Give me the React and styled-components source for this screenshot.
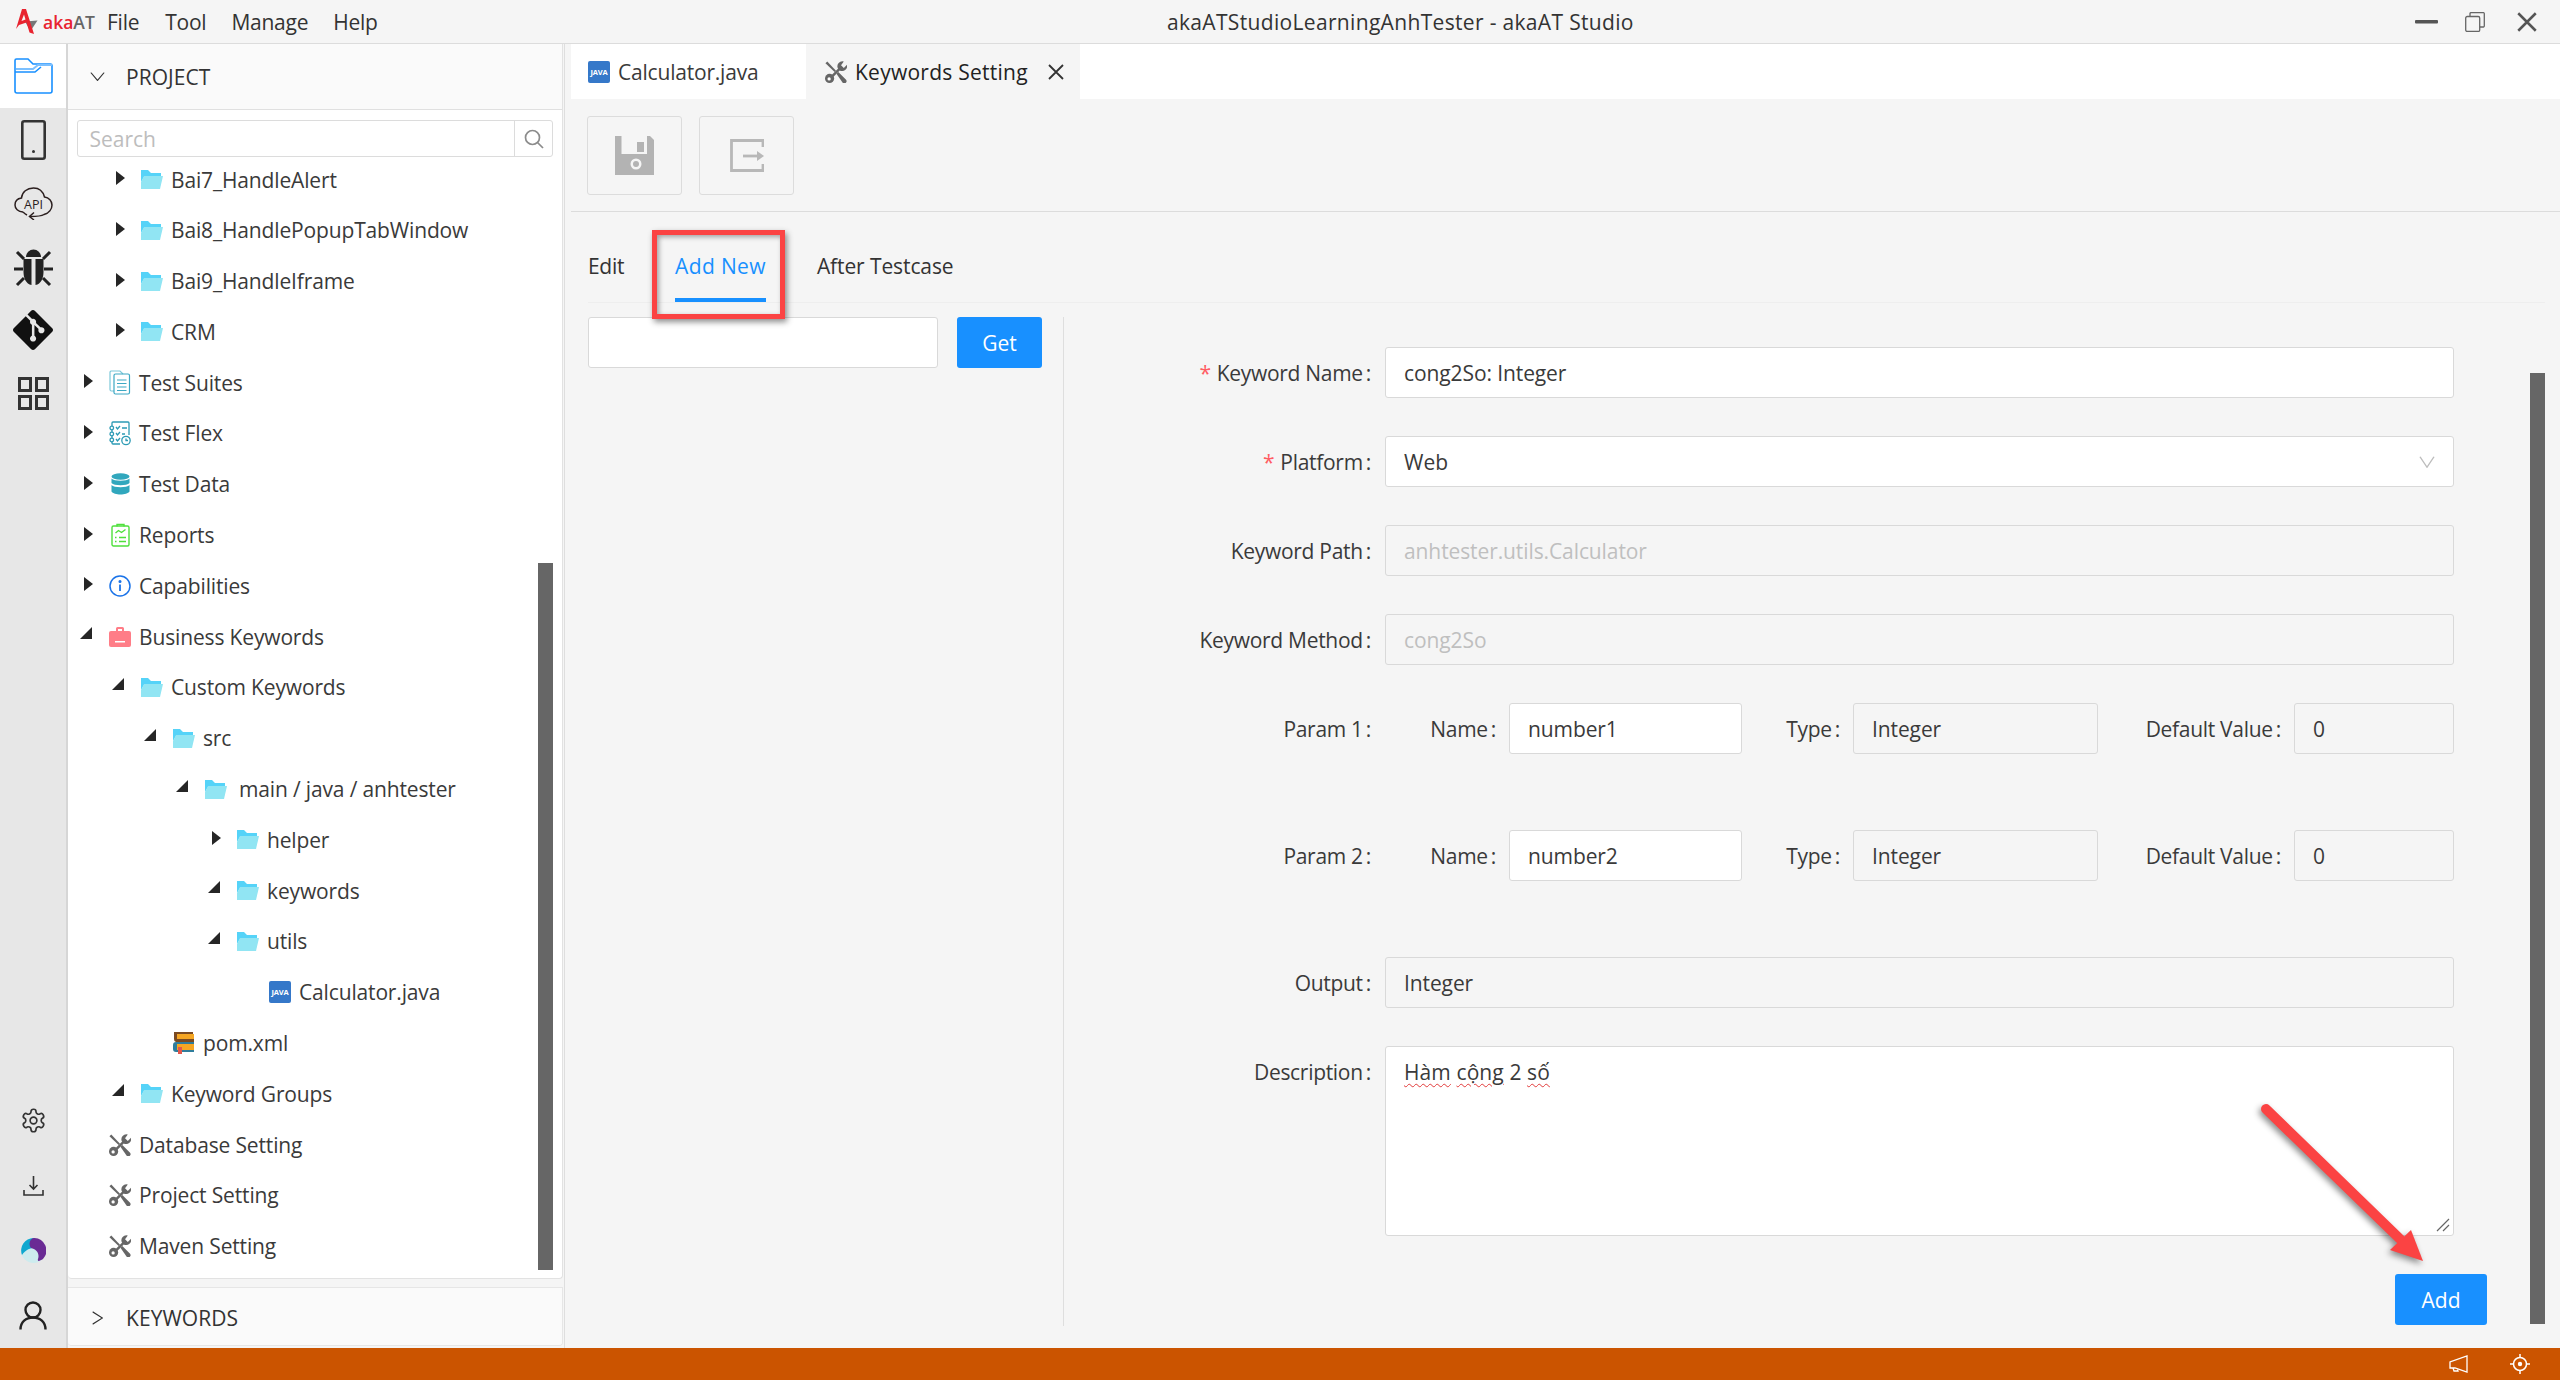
import React from "react";
import styled, { createGlobalStyle } from "styled-components";
import { SiGit } from "react-icons/si";
import { LuSettings } from "react-icons/lu";

const GlobalStyle = createGlobalStyle`
  html, body {
    margin: 0;
    padding: 0;
    background: #f5f5f5;
  }
  * {
    box-sizing: border-box;
  }
`;

const FONT = `"Open Sans", "Noto Sans", "Liberation Sans", sans-serif`;

const Page = styled.div`
  position: relative;
  width: 2560px;
  height: 1380px;
  display: flex;
  flex-direction: column;
  overflow: hidden;
  font-family: ${FONT};
  font-size: 21px;
  color: #333;
  background: #f5f5f5;
`;

/* title bar */
const TitleBar = styled.header`
  flex: 0 0 44px;
  display: flex;
  align-items: center;
  background: #f5f5f5;
  border-bottom: 1.5px solid #dcdcdc;
`;

const BrandMenu = styled.div`
  flex: 0 0 1167px;
  display: flex;
  align-items: center;
  padding-left: 16px;
`;

const LogoText = styled.div`
  display: flex;
  margin-left: 5px;
  width: 64px;
  font-size: 17.5px;
  font-weight: 600;
  color: #e8232f;
`;

const LogoGray = styled.span`
  color: #666;
`;

const MenuItem = styled.span`
  margin-right: ${(p) => p.$gap}px;
  color: #333;
  letter-spacing: -0.25px;
`;

const WindowTitle = styled.div`
  color: #333;
  white-space: nowrap;
  letter-spacing: 0.33px;
`;

const WindowButtons = styled.div`
  margin-left: auto;
  display: flex;
  align-items: center;
  gap: 27px;
  padding-right: 23px;
`;

const WindowClose = styled.span`
  display: flex;
  margin-left: 5.5px;
`;

/* body */
const Body = styled.div`
  flex: 1;
  display: flex;
  min-height: 0;
`;

const Rail = styled.nav`
  flex: 0 0 68px;
  display: flex;
  flex-direction: column;
  justify-content: space-between;
  background: #e7e7e7;
  border-right: 2px solid #d6d6d6;
`;

const RailGroup = styled.div`
  display: flex;
  flex-direction: column;
`;

const RailItem = styled.div`
  height: ${(p) => p.$h || 63.5}px;
  display: flex;
  align-items: center;
  justify-content: center;
  background: ${(p) => (p.$active ? "#fff" : "transparent")};
  color: #222;
`;

const SideColumn = styled.aside`
  flex: 0 0 497px;
  display: flex;
  flex-direction: column;
  background: #f5f5f5;
  border-right: 1.5px solid #dedede;
  padding-right: 1.5px;
`;

const ProjectCard = styled.section`
  height: 1235px;
  display: flex;
  flex-direction: column;
  background: #fff;
  border: solid #e2e2e2;
  border-width: 0 1px 1.5px 0;
  border-radius: 0 0 4px 4px;
`;

const CardHeader = styled.div`
  height: ${(p) => p.$h}px;
  flex: none;
  display: flex;
  align-items: center;
  background: #fafafa;
  border-bottom: ${(p) => (p.$line ? "1.5px solid #e0e0e0" : "none")};
  letter-spacing: 0.05px;
`;

const HeaderChevron = styled.span`
  width: 58px;
  display: flex;
  justify-content: center;
`;

const SearchBox = styled.div`
  flex: none;
  height: 37px;
  margin: 10px 8.5px 0 8.5px;
  display: flex;
  align-items: center;
  border: 1.5px solid #dcdcdc;
  border-radius: 3px;
  position: relative;
  z-index: 1;
  background: #fff;
`;

const SearchInput = styled.input`
  flex: 1;
  min-width: 0;
  height: 100%;
  border: 0;
  outline: 0;
  background: transparent;
  padding: 0 0 0 12px;
  font: inherit;
  &::placeholder {
    color: #bdbdbd;
  }
`;

const SearchIconBox = styled.span`
  width: 38px;
  height: 100%;
  display: flex;
  align-items: center;
  justify-content: center;
  border-left: 1.5px solid #dcdcdc;
`;

const Tree = styled.div`
  flex: 1;
  margin-top: -2.9px;
  position: relative;
  overflow: hidden;
`;

const Row = styled.div`
  height: 50.8px;
  display: flex;
  align-items: center;
  padding-left: ${(p) => 12 + p.$level * 32}px;
  white-space: nowrap;
`;

const CaretBox = styled.span`
  flex: 0 0 16px;
  height: 20px;
  margin-right: 13px;
  display: flex;
  align-items: center;
  justify-content: ${(p) => (p.$open ? "flex-start" : "center")};
  position: relative;
  top: ${(p) => (p.$open ? -3.5 : -1.5)}px;
`;

const CaretRight = styled.span`
  width: 0;
  height: 0;
  border-style: solid;
  border-width: 7px 0 7px 9px;
  border-color: transparent transparent transparent #262626;
`;

const CaretOpen = styled.span`
  width: 0;
  height: 0;
  border-style: solid;
  border-width: 0 0 12px 12px;
  border-color: transparent transparent #262626 transparent;
`;

const IconSlot = styled.span`
  flex: 0 0 22px;
  height: 24px;
  display: flex;
  align-items: center;
  justify-content: center;
  margin-right: ${(p) => p.$gap || 8}px;
`;

const RowLabel = styled.span`
  color: #3a3a3a;
  letter-spacing: -0.15px;
`;

const JavaBadge = styled.span`
  width: 22px;
  height: 22px;
  flex: none;
  border-radius: 2px;
  background: #3578c9;
  color: #fff;
  font-size: 7.5px;
  font-weight: 700;
  line-height: 22px;
  text-align: center;
  letter-spacing: -0.2px;
`;

const Scrollbar = styled.div`
  position: absolute;
  background: #666;
  width: 15px;
  right: ${(p) => p.$right}px;
  top: ${(p) => p.$top}px;
  height: ${(p) => p.$h}px;
`;

const KeywordsCard = styled.section`
  margin-top: 8px;
  height: 59px;
  border: 1.5px solid #e6e6e6;
  border-left: 0;
  border-radius: 0 0 4px 4px;
  overflow: hidden;
`;

/* main */
const Main = styled.main`
  flex: 1;
  min-width: 0;
  display: flex;
  flex-direction: column;
  position: relative;
  background: #f5f5f5;
`;

const TabStrip = styled.div`
  flex: 0 0 55px;
  margin-left: 6px;
  display: flex;
  background: #fff;
`;

const FileTab = styled.div`
  width: ${(p) => p.$w}px;
  display: flex;
  align-items: center;
  padding-left: ${(p) => p.$pad}px;
  gap: 8px;
  background: ${(p) => (p.$active ? "#f5f5f5" : "#fff")};
  color: ${(p) => (p.$active ? "#222" : "#3a3a3a")};
  white-space: nowrap;
  letter-spacing: ${(p) => (p.$active ? "0.25px" : "-0.2px")};
`;

const CloseX = styled.span`
  display: flex;
  margin-left: 12px;
`;

const Toolbar = styled.div`
  flex: 0 0 113px;
  display: flex;
  gap: 17px;
  margin-left: 6px;
  padding: 17px 0 0 16px;
  border-bottom: 1.5px solid #dcdcdc;
`;

const ToolButton = styled.div`
  width: 95px;
  height: 79px;
  display: flex;
  align-items: center;
  justify-content: center;
  border: 1.5px solid #dcdcdc;
  border-radius: 3px;
`;

const TabsBar = styled.div`
  flex: 0 0 90px;
  display: flex;
  gap: 51px;
  margin: 0 15.5px 0 23px;
  border-bottom: 1.5px solid #eeeeee;
`;

const TabItem = styled.div`
  height: 90px;
  padding-top: 36px;
  line-height: 36px;
  color: ${(p) => (p.$active ? "#1890ff" : "#333")};
  border-bottom: ${(p) => (p.$active ? "4px solid #1890ff" : "none")};
  white-space: nowrap;
  letter-spacing: ${(p) => p.$spacing}px;
`;

const Content = styled.div`
  flex: 1;
  min-height: 0;
  display: flex;
  margin: 14px 0 0 23px;
`;

const LookupColumn = styled.div`
  flex: 0 0 476px;
  height: 1009px;
  display: flex;
  gap: 19px;
  align-items: flex-start;
  border-right: 1.5px solid #dedede;
`;

const Input = styled.input`
  width: ${(p) => (p.$w ? `${p.$w}px` : "100%")};
  height: 51px;
  flex: ${(p) => (p.$w ? "none" : "1")};
  min-width: 0;
  padding: 0 18px;
  font: inherit;
  letter-spacing: -0.1px;
  outline: 0;
  border: 1.5px solid #d9d9d9;
  border-radius: 3px;
  background: ${(p) => (p.$muted ? "#f5f5f5" : "#fff")};
  color: ${(p) => (p.$faded ? "#bfbfbf" : "#3a3a3a")};
`;

const PrimaryButton = styled.button`
  width: ${(p) => p.$w}px;
  height: 51px;
  flex: none;
  border: 0;
  border-radius: 3px;
  background: #1890ff;
  color: #fff;
  font: inherit;
`;

const Form = styled.div`
  width: 1390px;
  padding-top: 30px;
  display: flex;
  flex-direction: column;
  align-items: stretch;
`;

const FormRow = styled.div`
  display: grid;
  grid-template-columns: 307px 1fr;
  column-gap: 14px;
  margin-bottom: ${(p) => p.$gap || 38}px;
  align-items: ${(p) => (p.$top ? "start" : "center")};
`;

const Label = styled.label`
  display: block;
  text-align: right;
  white-space: nowrap;
  color: #3a3a3a;
  letter-spacing: -0.3px;
  line-height: ${(p) => (p.$top ? "53px" : "normal")};
`;

const Required = styled.span`
  color: #ff5c63;
  margin-right: 6px;
`;

const Colon = styled.span`
  margin-left: 3px;
`;

const ParamFields = styled.div`
  display: flex;
  align-items: center;
`;

const ParamLabel = styled(Label)`
  flex: 0 0 ${(p) => p.$w}px;
  padding-right: 13px;
`;

const SelectBox = styled.div`
  height: 51px;
  padding: 0 18px;
  display: flex;
  align-items: center;
  justify-content: space-between;
  background: #fff;
  border: 1.5px solid #d9d9d9;
  border-radius: 3px;
  color: #3a3a3a;
`;

const TextArea = styled.div`
  position: relative;
  height: 190px;
  padding: 11px 18px;
  background: #fff;
  border: 1.5px solid #d9d9d9;
  border-radius: 3px;
  color: #3a3a3a;
  letter-spacing: 0.1px;
`;

const Misspelled = styled.span`
  text-decoration: underline wavy #e23b3b 1.2px;
  text-underline-offset: 3px;
`;

const ResizeGrip = styled.svg`
  position: absolute;
  right: 3px;
  bottom: 3px;
`;

const FormActions = styled.div`
  display: flex;
  justify-content: flex-end;
  margin-right: -33px;
`;

/* annotations */
const Callout = styled.div`
  position: absolute;
  left: 652px;
  top: 230px;
  width: 133px;
  height: 89px;
  border: 5px solid #fb4343;
  box-shadow: 2px 3px 6px rgba(0, 0, 0, 0.45), inset 2px 2px 5px rgba(0, 0, 0, 0.35);
`;

const ArrowMark = styled.svg`
  position: absolute;
  left: 2250px;
  top: 1095px;
  filter: drop-shadow(-2px 3px 3px rgba(0, 0, 0, 0.45));
`;

/* status bar */
const StatusBar = styled.footer`
  flex: 0 0 32px;
  display: flex;
  align-items: center;
  justify-content: flex-end;
  gap: 42px;
  padding-right: 30px;
  background: #cb5400;
`;

/* icons */
const Folder = () => (
  <svg width="22" height="19" viewBox="0 0 22 19">
    <path d="M0 0H7L10 3H20V7H3L0 12Z" fill="#55d3f8" />
    <path d="M0 19V12L3 6H22L19 19Z" fill="#91e5f3" />
  </svg>
);

const Tools = ({ size = 22 }) => (
  <svg width={size} height={size} viewBox="0 0 24 24">
    <path d="M0.5 2.5L2.5 0.5L12 10.5L10.5 12Z" fill="#666" />
    <path d="M12.5 14L14.5 12L23 20.5A2.5 2.5 0 0 1 19.5 24Z" fill="#666" />
    <path d="M7 15.5L15.5 7L17.5 9L9 17.5Z" fill="#666" />
    <path d="M24 4L20.5 7.5L17.5 4.5L20.5 0.5A5.5 5.5 0 0 0 14 8L16.5 10.5A5.5 5.5 0 0 0 24 4Z" fill="#666" />
    <circle cx="5" cy="19" r="5" fill="#666" />
    <circle cx="4.5" cy="19.5" r="1.8" fill="#fff" />
  </svg>
);

const Suites = () => (
  <svg width="22" height="25" viewBox="0 0 22 25" fill="none" stroke="#3da8c4" strokeWidth="1.2">
    <path d="M5 21H2.5A1.5 1.5 0 0 1 1 19.5V2A1.5 1.5 0 0 1 2.5 1H11L14 4" stroke="#7cc8da" />
    <rect x="5" y="4" width="15.5" height="20" rx="1.5" />
    <path d="M8 10H17.5M8 13.5H17.5M8 17H17.5M8 20.5H17.5" />
  </svg>
);

const Flex = () => (
  <svg width="22" height="25" viewBox="0 0 22 25" fill="none" stroke="#2d9bb5" strokeWidth="1.3">
    <path d="M3 5V2A1 1 0 0 1 4 1H19A1 1 0 0 1 20 2V14M3 9V11M3 15V17M3 21V22A1 1 0 0 0 4 23H11" />
    <circle cx="2.8" cy="7" r="1.8" />
    <circle cx="2.8" cy="13" r="1.8" />
    <circle cx="2.8" cy="19" r="1.8" />
    <path d="M7 6L8.5 8L11 5M7 12L8.5 14L11 11M7 18L8.5 20L11 17M13 7H18M13 13H16" />
    <circle cx="17" cy="19.5" r="4.2" fill="#fff" />
    <path d="M17 17.5V19.5H19" />
  </svg>
);

const Database = () => (
  <svg width="19" height="22" viewBox="0 0 19 22">
    <ellipse cx="9.5" cy="3.5" rx="9" ry="3.2" fill="#31a7bd" />
    <path d="M0.5 5.5C3 8.5 16 8.5 18.5 5.5V10C16 13 3 13 0.5 10Z" fill="#31a7bd" />
    <path d="M0.5 12C3 15 16 15 18.5 12V18.5C16 22.5 3 22.5 0.5 18.5Z" fill="#31a7bd" />
  </svg>
);

const Report = () => (
  <svg width="19" height="24" viewBox="0 0 19 24" fill="none" stroke="#4fe03c" strokeWidth="1.4">
    <rect x="1" y="3" width="17" height="20" rx="1.5" />
    <path d="M6 3.5V1.5H13V3.5" />
    <path d="M4.5 10L7.5 7.5L10.5 9.5L14.5 6.5M4 14.5H5.5M8 14.5H15M4 18.5H5.5M8 18.5H15" />
  </svg>
);

const Info = () => (
  <svg width="22" height="22" viewBox="0 0 22 22" fill="none" stroke="#1a73e8" strokeWidth="1.5">
    <circle cx="11" cy="11" r="10" />
    <path d="M11 9.5V16" strokeWidth="1.8" />
    <circle cx="11" cy="6.5" r="0.8" fill="#1a73e8" />
  </svg>
);

const Briefcase = () => (
  <svg width="22" height="20" viewBox="0 0 22 20">
    <path d="M7 4V1.5A1.5 1.5 0 0 1 8.5 0H13.5A1.5 1.5 0 0 1 15 1.5V4H13V2H9V4Z" fill="#ff7d87" />
    <rect x="0" y="4" width="22" height="16" rx="2" fill="#ff7d87" />
    <rect x="6" y="14" width="10" height="1.5" fill="#fff" />
  </svg>
);

const Books = () => (
  <svg width="22" height="22" viewBox="0 0 22 22">
    <path d="M1 0H20V2H4V7H21V10H3A3 3 0 0 1 1 7Z" fill="#7a4a22" />
    <rect x="4" y="2" width="17" height="5" fill="#f5a623" />
    <path d="M0 13A3 3 0 0 1 3 10H21V12H4V18H21V20H3A3 3 0 0 1 0 17Z" fill="#2f7d9c" />
    <rect x="4" y="12" width="17" height="6" fill="#f5a623" />
    <rect x="5" y="15" width="4" height="7" fill="#e2574c" />
  </svg>
);

const RailFolder = () => (
  <svg width="39" height="36" viewBox="0 0 39 36" fill="none" stroke="#1890ff" strokeWidth="1.6">
    <path d="M1 8V2.5A1.5 1.5 0 0 1 2.5 1H14L19 6H36.5A1.5 1.5 0 0 1 38 7.5V33A2 2 0 0 1 36 35H3A2 2 0 0 1 1 33Z" />
    <path d="M2 11H19L24 7H38" stroke="#7cc0ff" strokeWidth="2" />
    <path d="M1 14H21L27 9" />
  </svg>
);

const Phone = () => (
  <svg width="25" height="40" viewBox="0 0 25 40" fill="none" stroke="#333" strokeWidth="2.6">
    <rect x="1.3" y="1.3" width="22.4" height="37.4" rx="2" />
    <circle cx="12.5" cy="31.5" r="1.5" fill="#333" stroke="none" />
  </svg>
);

const ApiCloud = () => (
  <svg width="39" height="33" viewBox="0 0 39 33" fill="none" stroke="#2b1f1f" strokeWidth="1.5">
    <path d="M9 25C4 25 1 21.5 1 18C1 14 4 11.5 7.5 11C8 5 13 1 19.5 1C25 1 29 4.5 30.5 10C35 10.5 38 14 38 18C38 22 35 26 30 27.5C27 29.5 22 29.5 16 29.5" />
    <path d="M20 25.5L15.5 29.5L20 33" />
    <path d="M9 25C10 26 11 27 13 28" />
    <text x="19.5" y="22" fontSize="12.5" fontFamily="Open Sans, sans-serif" fill="#2b1f1f" stroke="none" textAnchor="middle">API</text>
  </svg>
);

const Bug = () => (
  <svg width="39" height="40" viewBox="0 0 39 40" fill="#222">
    <path d="M12 10A7.5 7.5 0 0 1 27 10Z" />
    <path d="M9.5 12H17.5V38C12 37 9.5 31 9.5 25Z" />
    <path d="M29.5 12H21.5V38C27 37 29.5 31 29.5 25Z" />
    <path d="M3 5L10 12M36 5L29 12M0 22H9M39 22H30M3 38L10 31M36 38L29 31" stroke="#222" strokeWidth="3" />
  </svg>
);

const Grid = () => (
  <svg width="31" height="33" viewBox="0 0 31 33" fill="none" stroke="#333" strokeWidth="3">
    <rect x="1.5" y="1.5" width="11" height="12" />
    <rect x="18.5" y="1.5" width="11" height="12" />
    <rect x="1.5" y="19.5" width="11" height="12" />
    <rect x="18.5" y="19.5" width="11" height="12" />
  </svg>
);

const Download = () => (
  <svg width="21" height="20" viewBox="0 0 21 20" fill="none" stroke="#333" strokeWidth="1.6">
    <path d="M10.5 0V12M6.5 9L10.5 13L14.5 9" />
    <path d="M1 14V19H20V14" />
  </svg>
);

const SwirlLogo = () => (
  <svg width="25" height="25" viewBox="0 0 25 25">
    <circle cx="12.5" cy="12.5" r="12.5" fill="#cdebee" />
    <path d="M12.5 0A12.5 12.5 0 0 0 1 17C5 11 10 10 12.5 10Z" fill="#0fa7cf" />
    <path d="M12.5 0A12.5 12.5 0 0 1 22 21C19 23 16 24 17 21C19 15 15 11 10 10C7 6 9 1 12.5 0Z" fill="#6a2a94" />
  </svg>
);

const UserIcon = () => (
  <svg width="28" height="29" viewBox="0 0 28 29" fill="none" stroke="#222" strokeWidth="2.4">
    <circle cx="14" cy="9" r="7.5" />
    <path d="M1.5 28.5C1.5 21 7 16.5 14 16.5C21 16.5 26.5 21 26.5 28.5" />
  </svg>
);

const SearchGlass = () => (
  <svg width="20" height="20" viewBox="0 0 20 20" fill="none" stroke="#8c8c8c" strokeWidth="1.7">
    <circle cx="8.5" cy="8.5" r="7" />
    <path d="M13.5 13.5L19 19" />
  </svg>
);

const Chevron = ({ dir, w, h, color = "#333" }) => (
  <svg width={w} height={h} viewBox="0 0 16 16" preserveAspectRatio="none" fill="none" stroke={color} strokeWidth="1.4">
    {dir === "down" ? <path d="M1 1L8 15L15 1" /> : <path d="M1 1L15 8L1 15" />}
  </svg>
);

const Floppy = () => (
  <svg width="39" height="39" viewBox="0 0 39 39">
    <path d="M0 0H35L39 4V39H0Z" fill="#b3b3b3" />
    <rect x="6.5" y="0" width="25.5" height="18" fill="#f5f5f5" />
    <rect x="22" y="6" width="7" height="10" fill="#b3b3b3" />
    <circle cx="21" cy="28" r="5.5" fill="#f5f5f5" />
    <circle cx="21" cy="28" r="3" fill="#b3b3b3" />
  </svg>
);

const ExitBox = () => (
  <svg width="34" height="33" viewBox="0 0 34 33" fill="none" stroke="#b8b8b8" strokeWidth="2.8">
    <path d="M33 8V1.5H1.5V31.5H33V25" />
    <path d="M13 17H28" />
    <path d="M27 12L34 17L27 22Z" fill="#b8b8b8" stroke="none" />
  </svg>
);

const XMark = ({ size, color = "#333", width = 1.8 }) => (
  <svg width={size} height={size} viewBox="0 0 16 16" fill="none" stroke={color} strokeWidth={width}>
    <path d="M1 1L15 15M15 1L1 15" />
  </svg>
);

const Minimize = () => (
  <svg width="23" height="4" viewBox="0 0 23 4">
    <rect width="23" height="3.5" rx="1" fill="#555" />
  </svg>
);

const Restore = () => (
  <svg width="20" height="20" viewBox="0 0 20 20" fill="none" stroke="#666" strokeWidth="1.3">
    <path d="M5 4V1.5A1 1 0 0 1 6 .7H18.5A1 1 0 0 1 19.3 1.5V14A1 1 0 0 1 18.5 15H15" />
    <rect x="0.7" y="4.5" width="14" height="15" rx="1.5" fill="#f5f5f5" />
  </svg>
);

const LogoMark = () => (
  <svg width="22" height="25" viewBox="0 0 22 25">
    <path d="M9 12.5L21.5 11.5L14.5 22Z" fill="#777" />
    <path d="M6 0H10L18 25L13.5 23.5L10.5 13.5L3 16L0 20ZM8 5.5L5.5 12L9.5 10.5Z" fill="#e8232f" fillRule="evenodd" />
  </svg>
);

const Megaphone = () => (
  <svg width="19" height="18" viewBox="0 0 19 18" fill="none" stroke="#fff" strokeWidth="1.3">
    <path d="M18 1V17L6 13H1V7Z" />
    <path d="M4 13L5 16H9L8.5 14.5" />
  </svg>
);

const Target = () => (
  <svg width="20" height="20" viewBox="0 0 20 20" fill="none" stroke="#fff" strokeWidth="1.5">
    <circle cx="10" cy="10" r="6.5" />
    <circle cx="10" cy="10" r="2.2" fill="#fff" stroke="none" />
    <path d="M10 0V4M10 16V20M0 10H4M16 10H20" />
  </svg>
);

const renderRowIcon = (icon) => {
  switch (icon) {
    case "folder":
      return <Folder />;
    case "tools":
      return <Tools />;
    case "suites":
      return <Suites />;
    case "flex":
      return <Flex />;
    case "data":
      return <Database />;
    case "report":
      return <Report />;
    case "info":
      return <Info />;
    case "case":
      return <Briefcase />;
    case "books":
      return <Books />;
    default:
      return <JavaBadge>JAVA</JavaBadge>;
  }
};

const treeRows = [
  { level: 1, caret: "right", icon: "folder", label: "Bai7_HandleAlert" },
  { level: 1, caret: "right", icon: "folder", label: "Bai8_HandlePopupTabWindow" },
  { level: 1, caret: "right", icon: "folder", label: "Bai9_HandleIframe" },
  { level: 1, caret: "right", icon: "folder", label: "CRM" },
  { level: 0, caret: "right", icon: "suites", label: "Test Suites" },
  { level: 0, caret: "right", icon: "flex", label: "Test Flex" },
  { level: 0, caret: "right", icon: "data", label: "Test Data" },
  { level: 0, caret: "right", icon: "report", label: "Reports" },
  { level: 0, caret: "right", icon: "info", label: "Capabilities" },
  { level: 0, caret: "open", icon: "case", label: "Business Keywords" },
  { level: 1, caret: "open", icon: "folder", label: "Custom Keywords" },
  { level: 2, caret: "open", icon: "folder", label: "src" },
  { level: 3, caret: "open", icon: "folder", label: "main / java / anhtester", gap: 12 },
  { level: 4, caret: "right", icon: "folder", label: "helper" },
  { level: 4, caret: "open", icon: "folder", label: "keywords" },
  { level: 4, caret: "open", icon: "folder", label: "utils" },
  { level: 5, icon: "java", label: "Calculator.java" },
  { level: 2, icon: "books", label: "pom.xml" },
  { level: 1, caret: "open", icon: "folder", label: "Keyword Groups" },
  { level: 0, icon: "tools", label: "Database Setting" },
  { level: 0, icon: "tools", label: "Project Setting" },
  { level: 0, icon: "tools", label: "Maven Setting" },
];

const TreeRow = ({ level, caret, icon, label, gap }) => (
  <Row $level={level}>
    <CaretBox $open={caret === "open"}>
      {caret === "right" && <CaretRight />}
      {caret === "open" && <CaretOpen />}
    </CaretBox>
    <IconSlot $gap={gap}>{renderRowIcon(icon)}</IconSlot>
    <RowLabel>{label}</RowLabel>
  </Row>
);

const FieldLabel = ({ required, children }) => (
  <Label>
    {required && <Required>*</Required>}
    {children}
    <Colon>:</Colon>
  </Label>
);

const ParamRow = ({ title, name, gap }) => (
  <FormRow $gap={gap}>
    <FieldLabel>{title}</FieldLabel>
    <ParamFields>
      <ParamLabel $w={124}>
        Name<Colon>:</Colon>
      </ParamLabel>
      <Input $w={232.5} defaultValue={name} readOnly />
      <ParamLabel $w={111.5}>
        Type<Colon>:</Colon>
      </ParamLabel>
      <Input $w={245} $muted defaultValue="Integer" readOnly />
      <ParamLabel $w={196}>
        Default Value<Colon>:</Colon>
      </ParamLabel>
      <Input $w={160} $muted defaultValue="0" readOnly />
    </ParamFields>
  </FormRow>
);

const App = () => {
  return (
    <Page>
      <GlobalStyle />
      <TitleBar>
        <BrandMenu>
          <LogoMark />
          <LogoText>
            aka<LogoGray>AT</LogoGray>
          </LogoText>
          <MenuItem $gap={26}>File</MenuItem>
          <MenuItem $gap={25}>Tool</MenuItem>
          <MenuItem $gap={25}>Manage</MenuItem>
          <MenuItem $gap={0}>Help</MenuItem>
        </BrandMenu>
        <WindowTitle>akaATStudioLearningAnhTester - akaAT Studio</WindowTitle>
        <WindowButtons>
          <Minimize />
          <Restore />
          <WindowClose>
            <XMark size={20} color="#555" width={2} />
          </WindowClose>
        </WindowButtons>
      </TitleBar>

      <Body>
        <Rail>
          <RailGroup>
            <RailItem $active $h={64}>
              <RailFolder />
            </RailItem>
            <RailItem>
              <Phone />
            </RailItem>
            <RailItem>
              <ApiCloud />
            </RailItem>
            <RailItem>
              <Bug />
            </RailItem>
            <RailItem>
              <SiGit size={40} color="#111" />
            </RailItem>
            <RailItem>
              <Grid />
            </RailItem>
          </RailGroup>
          <RailGroup>
            <RailItem $h={65}>
              <LuSettings size={27} strokeWidth={1.5} color="#333" />
            </RailItem>
            <RailItem $h={65}>
              <Download />
            </RailItem>
            <RailItem $h={65}>
              <SwirlLogo />
            </RailItem>
            <RailItem $h={65}>
              <UserIcon />
            </RailItem>
          </RailGroup>
        </Rail>

        <SideColumn>
          <ProjectCard>
            <CardHeader $h={66} $line>
              <HeaderChevron>
                <Chevron dir="down" w={15} h={9} />
              </HeaderChevron>
              PROJECT
            </CardHeader>
            <SearchBox>
              <SearchInput placeholder="Search" readOnly />
              <SearchIconBox>
                <SearchGlass />
              </SearchIconBox>
            </SearchBox>
            <Tree>
              {treeRows.map((row) => (
                <TreeRow key={row.label} {...row} />
              ))}
              <Scrollbar $right={9} $top={409} $h={707} />
            </Tree>
          </ProjectCard>
          <KeywordsCard>
            <CardHeader $h={59}>
              <HeaderChevron>
                <Chevron dir="right" w={11} h={14} />
              </HeaderChevron>
              KEYWORDS
            </CardHeader>
          </KeywordsCard>
        </SideColumn>

        <Main>
          <TabStrip>
            <FileTab $w={235} $pad={17}>
              <JavaBadge>JAVA</JavaBadge>
              Calculator.java
            </FileTab>
            <FileTab $w={274} $pad={19} $active>
              <Tools />
              Keywords Setting
              <CloseX>
                <XMark size={16} />
              </CloseX>
            </FileTab>
          </TabStrip>

          <Toolbar>
            <ToolButton>
              <Floppy />
            </ToolButton>
            <ToolButton>
              <ExitBox />
            </ToolButton>
          </Toolbar>

          <TabsBar>
            <TabItem $spacing={-0.3}>Edit</TabItem>
            <TabItem $active $spacing={0.35}>Add New</TabItem>
            <TabItem $spacing={-0.1}>After Testcase</TabItem>
          </TabsBar>

          <Content>
            <LookupColumn>
              <Input $w={350} readOnly />
              <PrimaryButton $w={85}>Get</PrimaryButton>
            </LookupColumn>
            <Form>
              <FormRow>
                <FieldLabel required>Keyword Name</FieldLabel>
                <Input defaultValue="cong2So: Integer" readOnly />
              </FormRow>
              <FormRow>
                <FieldLabel required>Platform</FieldLabel>
                <SelectBox>
                  Web
                  <Chevron dir="down" w={16} h={12} color="#bdbdbd" />
                </SelectBox>
              </FormRow>
              <FormRow>
                <FieldLabel>Keyword Path</FieldLabel>
                <Input $muted $faded defaultValue="anhtester.utils.Calculator" readOnly />
              </FormRow>
              <FormRow>
                <FieldLabel>Keyword Method</FieldLabel>
                <Input $muted $faded defaultValue="cong2So" readOnly />
              </FormRow>
              <ParamRow title="Param 1" name="number1" gap={76} />
              <ParamRow title="Param 2" name="number2" gap={76} />
              <FormRow>
                <FieldLabel>Output</FieldLabel>
                <Input $muted defaultValue="Integer" readOnly />
              </FormRow>
              <FormRow $top>
                <Label $top>
                  Description<Colon>:</Colon>
                </Label>
                <TextArea>
                  <Misspelled>Hàm</Misspelled> <Misspelled>cộng</Misspelled> 2 <Misspelled>số</Misspelled>
                  <ResizeGrip width="14" height="14" viewBox="0 0 14 14" stroke="#666" strokeWidth="1.2">
                    <path d="M1 13L13 1M7 13L13 7" />
                  </ResizeGrip>
                </TextArea>
              </FormRow>
              <FormActions>
                <PrimaryButton $w={92}>Add</PrimaryButton>
              </FormActions>
            </Form>
          </Content>
          <Scrollbar $right={15} $top={329} $h={951} />
        </Main>
      </Body>

      <StatusBar>
        <Megaphone />
        <Target />
      </StatusBar>

      <Callout />
      <ArrowMark width="190" height="180" viewBox="0 0 190 180">
        <path d="M16 14L150 144" stroke="#fb4343" strokeWidth="10" strokeLinecap="round" fill="none" />
        <path d="M173 166L161 135L140 155Z" fill="#fb4343" />
      </ArrowMark>
    </Page>
  );
};

export default App;
